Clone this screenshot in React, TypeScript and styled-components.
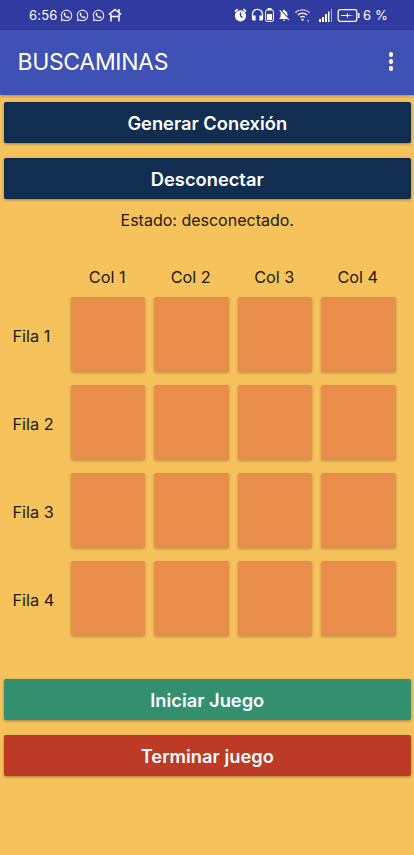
import React from 'react';
import styled, { createGlobalStyle } from 'styled-components';
import { FaWhatsapp } from 'react-icons/fa';
import { MdHeadset, MdNotificationsOff } from 'react-icons/md';

const GlobalStyle = createGlobalStyle`
  html, body {
    margin: 0;
    padding: 0;
    background: #f5c25c;
  }
  * {
    box-sizing: border-box;
  }
`;

const Page = styled.div`
  width: 414px;
  height: 855px;
  overflow: hidden;
  display: flex;
  flex-direction: column;
  background: #f5c25c;
  font-family: 'Inter', 'Liberation Sans', sans-serif;
`;

const StatusBar = styled.div`
  height: 30px;
  flex: none;
  display: flex;
  align-items: center;
  padding: 0 26px 0 29px;
  background: #2f3b9e;
  color: #fff;
  font-size: 13px;
`;

const StatusGroup = styled.div`
  display: flex;
  align-items: center;
  gap: 3px;
`;

const StatusRight = styled(StatusGroup)`
  margin-left: auto;
  gap: 0;
`;

const Slot = styled.span<{ $ml?: number }>`
  display: flex;
  align-items: center;
  margin-left: ${(p) => p.$ml ?? 0}px;
`;

const Time = styled.span`
  margin-right: -1px;
  letter-spacing: 0.2px;
`;

const Percent = styled.span`
  margin-left: 3px;
  letter-spacing: 0.2px;
`;

const AppBar = styled.header`
  height: 65px;
  flex: none;
  display: flex;
  align-items: center;
  justify-content: space-between;
  padding: 0 21px 2px 17.500px;
  background: #3f51b5;
  box-shadow: 0 1px 3px rgba(0, 0, 0, 0.3);
  color: #fff;
  position: relative;
`;

const Title = styled.h1`
  margin: 0;
  font-size: 23px;
  font-weight: 400;
  letter-spacing: -0.35px;
`;

const Overflow = styled.div`
  display: flex;
  flex-direction: column;
  gap: 2.500px;
  span {
    width: 4.500px;
    height: 4.500px;
    border-radius: 50%;
    background: #fff;
  }
`;

const Content = styled.main`
  flex: 1;
  display: flex;
  flex-direction: column;
  padding: 7px 3px 0 3.500px;
`;

const ActionButton = styled.button<{ $bg: string; $gap: number }>`
  height: 41px;
  flex: none;
  margin-bottom: ${(p) => p.$gap}px;
  padding-bottom: 1px;
  border: none;
  border-radius: 2px;
  background: ${(p) => p.$bg};
  color: #fff;
  font-family: inherit;
  font-size: 18.300px;
  font-weight: 600;
  box-shadow: 0 1px 3px rgba(0, 0, 0, 0.35);
`;

const Status = styled.p`
  margin: 0;
  height: 22px;
  line-height: 22px;
  text-align: center;
  font-size: 16px;
  color: #1d1a12;
`;

const Board = styled.div`
  display: grid;
  grid-template-columns: 54px repeat(4, 74.500px);
  grid-template-rows: 13px repeat(4, 74.500px);
  column-gap: 9px;
  row-gap: 13.500px;
  margin: 39.500px 0 0 4px;
`;

const ColLabel = styled.div`
  text-align: center;
  line-height: 13px;
  font-size: 16.300px;
  color: #1d1a12;
  margin-left: -1px;
`;

const RowLabel = styled.div`
  display: flex;
  align-items: center;
  padding: 4px 0 0 5px;
  font-size: 16.300px;
  color: #1d1a12;
`;

const Cell = styled.div`
  background: #e88d4a;
  border-radius: 2px;
  box-shadow: 0 1px 3px rgba(0, 0, 0, 0.25);
`;

const GameButtons = styled.div`
  display: flex;
  flex-direction: column;
  margin-top: 43.500px;
`;

const AlarmIcon = () => (
  <svg width="13" height="14" viewBox="0 0 13 14">
    <circle cx="6.500" cy="7.800" r="5.600" fill="#fff" />
    <path d="M0.300 3 3 0.600 4.200 1.800 1.500 4.300zM12.700 3 10 0.600 8.800 1.800 11.500 4.300z" fill="#fff" />
    <path d="M6.500 4.500v3.500l2 1.500" fill="none" stroke="#2f3b9e" strokeWidth="1.300" />
  </svg>
);

const WifiIcon = () => (
  <svg width="15" height="15" viewBox="0 0 16 15" fill="none" stroke="#fff" strokeWidth="1.200">
    <path d="M0.500 4.500c4.200-4 10.800-4 15 0" strokeDasharray="2 0.500" />
    <path d="M3 7c2.900-2.700 7.100-2.700 10 0" />
    <path d="M5.500 9.500c1.500-1.300 3.500-1.300 5 0" />
    <circle cx="8" cy="12" r="1.200" fill="#fff" stroke="none" />
    <circle cx="14" cy="13" r="0.800" fill="#fff" stroke="none" />
  </svg>
);

const HomeIcon = () => (
  <svg width="14" height="14" viewBox="0 0 14 14" fill="none" stroke="#fff" strokeWidth="1.500">
    <path d="M0.800 6.500 7 1.500l6.200 5" />
    <path d="M3 6v7.500M11 6v7.500M3 8.500h8" />
    <path d="M11 1v3" />
  </svg>
);

const BatterySmall = () => (
  <svg width="9" height="14" viewBox="0 0 9 14" fill="none">
    <rect x="0.600" y="2" width="7.800" height="11.400" rx="1.500" stroke="#fff" strokeWidth="1" />
    <rect x="2.500" y="0" width="4" height="2" fill="#fff" />
    <rect x="2" y="6" width="5" height="6" fill="#fff" />
  </svg>
);

const SignalIcon = () => (
  <svg width="13" height="13" viewBox="0 0 13 13" fill="#fff">
    <rect x="0" y="10" width="2" height="3" />
    <rect x="3" y="8" width="2" height="5" />
    <rect x="6" y="5" width="2" height="8" />
    <rect x="9" y="2.500" width="1.500" height="10.500" />
    <rect x="12" y="0" width="1" height="13" opacity="0.6" />
  </svg>
);

const BatteryIcon = () => (
  <svg width="23" height="13" viewBox="0 0 22 13" fill="none">
    <rect x="0.700" y="0.700" width="18.600" height="11.600" rx="2" stroke="#fff" strokeWidth="1.300" />
    <rect x="20.500" y="4" width="1.500" height="5" fill="#fff" />
    <path d="M3.500 6h5.500l1.500-2.500v2.500h6l-6 1v2.500l-1.500-2.500H3.500z" fill="#fff" />
  </svg>
);

const columns = ['Col 1', 'Col 2', 'Col 3', 'Col 4'];
const rows = ['Fila 1', 'Fila 2', 'Fila 3', 'Fila 4'];

export default function App() {
  return (
    <Page>
      <GlobalStyle />
      <StatusBar>
        <StatusGroup>
          <Time>6:56</Time>
          <FaWhatsapp size={13} />
          <FaWhatsapp size={13} />
          <FaWhatsapp size={13} />
          <HomeIcon />
        </StatusGroup>
        <StatusRight>
          <AlarmIcon />
          <Slot $ml={3}><MdHeadset size={15} /></Slot>
          <Slot $ml={0}><BatterySmall /></Slot>
          <Slot $ml={3}><MdNotificationsOff size={14} /></Slot>
          <Slot $ml={4}><WifiIcon /></Slot>
          <Slot $ml={9}><SignalIcon /></Slot>
          <Slot $ml={5}><BatteryIcon /></Slot>
          <Percent>6 %</Percent>
        </StatusRight>
      </StatusBar>
      <AppBar>
        <Title>BUSCAMINAS</Title>
        <Overflow>
          <span />
          <span />
          <span />
        </Overflow>
      </AppBar>
      <Content>
        <ActionButton $bg="#112e51" $gap={15}>Generar Conexión</ActionButton>
        <ActionButton $bg="#112e51" $gap={10}>Desconectar</ActionButton>
        <Status>Estado: desconectado.</Status>
        <Board>
          <div />
          {columns.map((c) => (
            <ColLabel key={c}>{c}</ColLabel>
          ))}
          {rows.map((r) => (
            <React.Fragment key={r}>
              <RowLabel>{r}</RowLabel>
              {columns.map((c) => (
                <Cell key={c} />
              ))}
            </React.Fragment>
          ))}
        </Board>
        <GameButtons>
          <ActionButton $bg="#33906e" $gap={15}>Iniciar Juego</ActionButton>
          <ActionButton $bg="#bd3a26" $gap={0}>Terminar juego</ActionButton>
        </GameButtons>
      </Content>
    </Page>
  );
}
